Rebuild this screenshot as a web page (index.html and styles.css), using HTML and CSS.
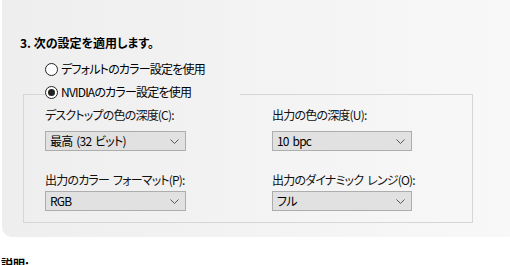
FILE: index.html
```html
<!DOCTYPE html>
<html lang="ja">
<head>
    <meta charset="UTF-8">
    <meta name="viewport" content="width=device-width, initial-scale=1.0">
    <title>カラー設定</title>
    <link rel="stylesheet" href="styles.css">
</head>
<body>
    <div class="panel">
        <h2 class="step">3. 次の設定を適用します。</h2>
        <div class="option">
            <span class="radio"></span>
            <span>デフォルトのカラー設定を使用</span>
        </div>
        <fieldset class="group">
            <legend class="option legend">
                <span class="radio checked"></span>
                <span>NVIDIAのカラー設定を使用</span>
            </legend>
            <div class="fields">
                <div class="field">
                    <div class="label">デスクトップの色の深度(C):</div>
                    <div class="dropdown">
                        <span>最高 (32 ビット)</span>
                        <svg width="9" height="5" viewBox="0 0 9 5"><path d="M0.5 0.5 L4.5 4.5 L8.5 0.5" fill="none" stroke="#555" stroke-width="1"/></svg>
                    </div>
                </div>
                <div class="field">
                    <div class="label">出力の色の深度(U):</div>
                    <div class="dropdown">
                        <span>10 bpc</span>
                        <svg width="9" height="5" viewBox="0 0 9 5"><path d="M0.5 0.5 L4.5 4.5 L8.5 0.5" fill="none" stroke="#555" stroke-width="1"/></svg>
                    </div>
                </div>
                <div class="field second">
                    <div class="label">出力のカラー フォーマット(P):</div>
                    <div class="dropdown">
                        <span>RGB</span>
                        <svg width="9" height="5" viewBox="0 0 9 5"><path d="M0.5 0.5 L4.5 4.5 L8.5 0.5" fill="none" stroke="#555" stroke-width="1"/></svg>
                    </div>
                </div>
                <div class="field second">
                    <div class="label">出力のダイナミック レンジ(O):</div>
                    <div class="dropdown">
                        <span>フル</span>
                        <svg width="9" height="5" viewBox="0 0 9 5"><path d="M0.5 0.5 L4.5 4.5 L8.5 0.5" fill="none" stroke="#555" stroke-width="1"/></svg>
                    </div>
                </div>
            </div>
        </fieldset>
    </div>
    <div class="note">説明:</div>
</body>
</html>
```

FILE: styles.css
```css
html, body {
    margin: 0;
    height: 265px;
    overflow: hidden;
}

body {
    background-color: #fff;
    color: #000;
    font-family: "Noto Sans CJK JP", "Noto Sans", sans-serif;
    font-size: 12px;
    line-height: 16px;
    font-feature-settings: "palt";
    letter-spacing: -0.8px;
    word-spacing: 2px;
    white-space: nowrap;
}

.panel {
    margin-left: 2px;
    padding: 35px 0 14px 18px;
    background: linear-gradient(to right, #eeeeee, #f8f8f8);
    border-bottom-left-radius: 10px;
}

.step {
    margin: 0;
    font-size: 12px;
    font-weight: bold;
    line-height: 16px;
    letter-spacing: 0;
    word-spacing: 0;
}

.option {
    display: flex;
    align-items: center;
    gap: 3px;
    margin: 10px 0 0 25px;
}

.radio {
    box-sizing: border-box;
    width: 13px;
    height: 13px;
    border: 1px solid #222;
    border-radius: 50%;
    background: #fff;
    display: flex;
    align-items: center;
    justify-content: center;
}

.radio.checked::after {
    content: "";
    width: 7px;
    height: 7px;
    border-radius: 50%;
    background: #222;
}

.group {
    width: 450px;
    box-sizing: border-box;
    margin: 7px 0 0 3px;
    padding: 0 0 11px 21px;
    border: 1px solid #d6d6d6;
}

.legend {
    margin: 0;
    padding: 0 0 4px 0;
    width: 195px;
    box-sizing: border-box;
}

.fields {
    display: grid;
    grid-template-columns: 141px 140px;
    column-gap: 86px;
    margin-top: 3px;
}

.label {
    line-height: 16px;
    color: #111;
}

.dropdown {
    box-sizing: border-box;
    height: 20px;
    margin-top: 8px;
    padding: 0 6px 0 4px;
    display: flex;
    align-items: center;
    justify-content: space-between;
    background: #e1e1e1;
    border: 1px solid #adadad;
}

.second {
    margin-top: 21px;
}

.second .dropdown {
    margin-top: 3px;
}

.note {
    margin-top: 19px;
    padding-left: 1px;
    font-weight: bold;
    letter-spacing: 0;
}
```
